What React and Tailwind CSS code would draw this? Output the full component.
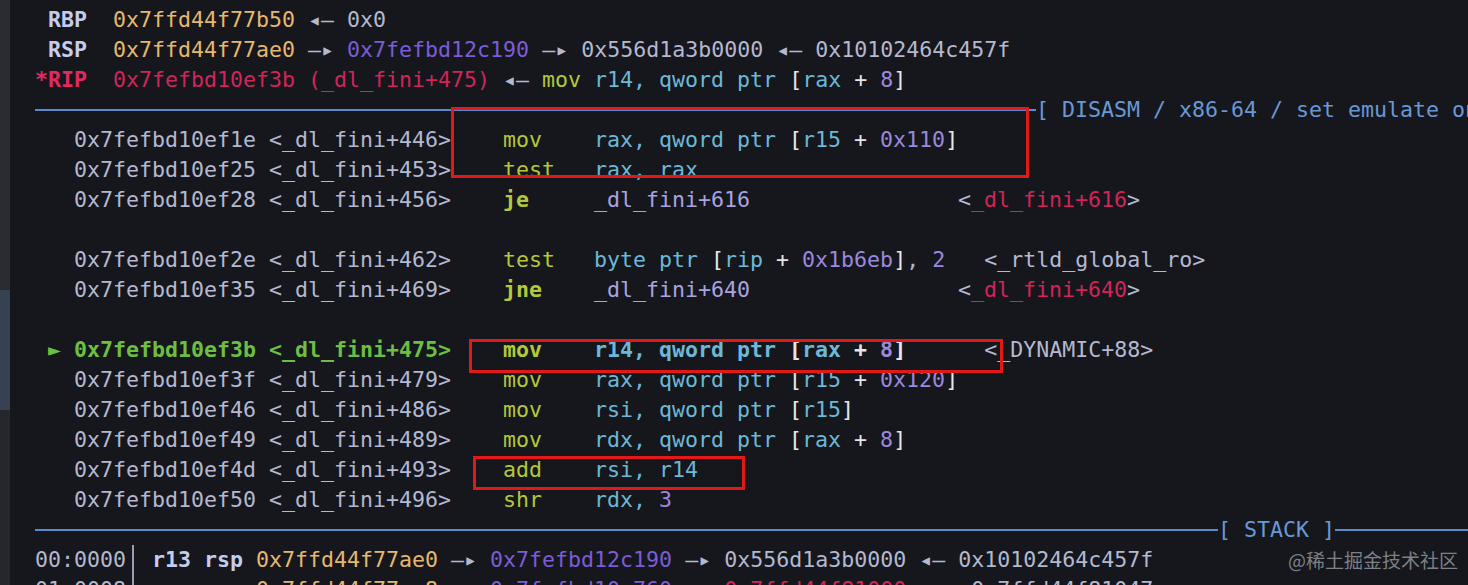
import React from "react";

const gry = "text-[#b4b8d0]";
const reg = "text-[#c6ccec] font-bold";
const org = "text-[#e6b86e]";
const pur = "text-[#7c5cd8]";
const red = "text-[#d3245a]";
const redB = "text-[#e22a60]";
const yg = "text-[#b3c83a]";
const cy = "text-[#6cb8d8]";
const wh = "text-[#e6e6ea]";
const num = "text-[#9c88de]";
const lav = "text-[#a8a4e0]";
const grn = "text-[#6cbf40] font-bold";
const blu = "text-[#6a98d6]";

const R = () => <span className={"inline-block w-[26px] " + gry}>—▸</span>;
const L = () => <span className={"inline-block w-[26px] " + gry}>◂—</span>;

const Row = ({ children }) => (
  <div className="h-[30px] leading-[30px] whitespace-pre">{children}</div>
);

const Mem = ({ r, off }) => (
  <>
    <span className={wh}>[</span>
    <span className={cy}>{r}</span>
    {off !== undefined && (
      <>
        <span className={wh}> + </span>
        <span className={num}>{off}</span>
      </>
    )}
    <span className={wh}>]</span>
  </>
);

const Addr = ({ a, s }) => (
  <span className={gry}>{"   " + a + " <_dl_fini+" + s + ">    "}</span>
);

const Sep = ({ w, label }) => (
  <div className="h-[30px] flex items-center whitespace-pre">
    <div className="h-[2px] bg-[#5b8ad0] shrink-0" style={{ width: w }} />
    <span className={blu + " shrink-0 leading-[30px]"}>{label}</span>
    <div className="h-[2px] bg-[#5b8ad0] flex-1 min-w-0" />
  </div>
);

const Bar = () => (
  <span className="inline-flex w-[13px] h-[30px] justify-center align-top">
    <span className="w-[2px] h-full bg-[#9a9eb2]" />
  </span>
);

export default function App() {
  return (
    <div className="relative w-[1468px] h-[585px] overflow-hidden bg-[#15171c] flex">
      <div className="w-[10px] h-full flex flex-col shrink-0">
        <div className="h-[290px] bg-[#2a2c32]" />
        <div className="h-[120px] bg-[#364152]" />
        <div className="flex-1 bg-[#25272d]" />
      </div>
      <div className="flex-1 min-w-0 pl-[25px] pt-[5px] font-['DejaVu_Sans_Mono',monospace] text-[21.6px] overflow-hidden">
        <Row>
          {" "}
          <span className={reg}>RBP</span>
          {"  "}
          <span className={org}>0x7ffd44f77b50</span> <L /> <span className={gry}>0x0</span>
        </Row>
        <Row>
          {" "}
          <span className={reg}>RSP</span>
          {"  "}
          <span className={org}>0x7ffd44f77ae0</span> <R /> <span className={pur}>0x7fefbd12c190</span> <R />{" "}
          <span className={gry}>0x556d1a3b0000</span> <L /> <span className={gry}>0x10102464c457f</span>
        </Row>
        <Row>
          <span className={redB + " font-bold"}>*RIP</span>
          {"  "}
          <span className={red}>0x7fefbd10ef3b (_dl_fini+475)</span> <L /> <span className={yg}>mov</span>{" "}
          <span className={cy}>r14, qword ptr </span>
          <Mem r="rax" off="8" />
        </Row>
        <Sep w={1001} label="[ DISASM / x86-64 / set emulate on ]" />
        <Row>
          <Addr a="0x7fefbd10ef1e" s="446" />
          <span className={yg}>{"mov    "}</span>
          <span className={cy}>rax, qword ptr </span>
          <Mem r="r15" off="0x110" />
        </Row>
        <Row>
          <Addr a="0x7fefbd10ef25" s="453" />
          <span className={yg}>{"test   "}</span>
          <span className={cy}>rax, rax</span>
        </Row>
        <Row>
          <Addr a="0x7fefbd10ef28" s="456" />
          <span className={yg + " font-bold"}>{"je     "}</span>
          <span className={lav}>_dl_fini+616</span>
          {"                "}
          <span className={gry}>{"<"}</span>
          <span className={red}>_dl_fini+616</span>
          <span className={gry}>{">"}</span>
        </Row>
        <Row> </Row>
        <Row>
          <Addr a="0x7fefbd10ef2e" s="462" />
          <span className={yg}>{"test   "}</span>
          <span className={cy}>byte ptr </span>
          <Mem r="rip" off="0x1b6eb" />
          <span className={gry}>, </span>
          <span className={num}>2</span>
          {"   "}
          <span className={gry}>{"<_rtld_global_ro>"}</span>
        </Row>
        <Row>
          <Addr a="0x7fefbd10ef35" s="469" />
          <span className={yg + " font-bold"}>{"jne    "}</span>
          <span className={lav}>_dl_fini+640</span>
          {"                "}
          <span className={gry}>{"<"}</span>
          <span className={red}>_dl_fini+640</span>
          <span className={gry}>{">"}</span>
        </Row>
        <Row> </Row>
        <Row>
          <span className={grn}>{" ► 0x7fefbd10ef3b <_dl_fini+475>    "}</span>
          <span className={yg + " font-bold"}>{"mov    "}</span>
          <span className={cy + " font-bold"}>r14, qword ptr </span>
          <span className="font-bold">
            <Mem r="rax" off="8" />
          </span>
          {"      "}
          <span className={gry}>{"<_DYNAMIC+88>"}</span>
        </Row>
        <Row>
          <Addr a="0x7fefbd10ef3f" s="479" />
          <span className={yg}>{"mov    "}</span>
          <span className={cy}>rax, qword ptr </span>
          <Mem r="r15" off="0x120" />
        </Row>
        <Row>
          <Addr a="0x7fefbd10ef46" s="486" />
          <span className={yg}>{"mov    "}</span>
          <span className={cy}>rsi, qword ptr </span>
          <Mem r="r15" />
        </Row>
        <Row>
          <Addr a="0x7fefbd10ef49" s="489" />
          <span className={yg}>{"mov    "}</span>
          <span className={cy}>rdx, qword ptr </span>
          <Mem r="rax" off="8" />
        </Row>
        <Row>
          <Addr a="0x7fefbd10ef4d" s="493" />
          <span className={yg}>{"add    "}</span>
          <span className={cy}>rsi, r14</span>
        </Row>
        <Row>
          <Addr a="0x7fefbd10ef50" s="496" />
          <span className={yg}>{"shr    "}</span>
          <span className={cy}>rdx, </span>
          <span className={num}>3</span>
        </Row>
        <Sep w={1183} label="[ STACK ]" />
        <Row>
          <span className={gry}>00:0000</span>
          <Bar /> <span className={reg}>r13 rsp</span> <span className={org}>0x7ffd44f77ae0</span> <R />{" "}
          <span className={pur}>0x7fefbd12c190</span> <R /> <span className={gry}>0x556d1a3b0000</span> <L />{" "}
          <span className={gry}>0x10102464c457f</span>
        </Row>
        <Row>
          <span className={gry}>01:0008</span>
          <Bar />
          {"         "}
          <span className={org}>0x7ffd44f77ae8</span> <R /> <span className={pur}>0x7fefbd10e760</span> <R />{" "}
          <span className={red}>0x7ffd44f81000</span> <span className={yg}>{" ◂— "}</span>
          <span className={gry}>0x7ffd44f81047</span>
        </Row>
      </div>

      <div className="absolute left-[451px] top-[107px] w-[578px] h-[71px] border-[3px] border-[#e31818]" />
      <div className="absolute left-[469px] top-[339px] w-[534px] h-[34px] border-[3px] border-[#e31818]" />
      <div className="absolute left-[473px] top-[456px] w-[272px] h-[34px] border-[3px] border-[#e31818]" />

      <div className="absolute left-[1288px] top-[546px] text-[19px] leading-[28px] text-[#7d8087] font-['Noto_Sans_CJK_SC',sans-serif]">
        @稀土掘金技术社区
      </div>
    </div>
  );
}
